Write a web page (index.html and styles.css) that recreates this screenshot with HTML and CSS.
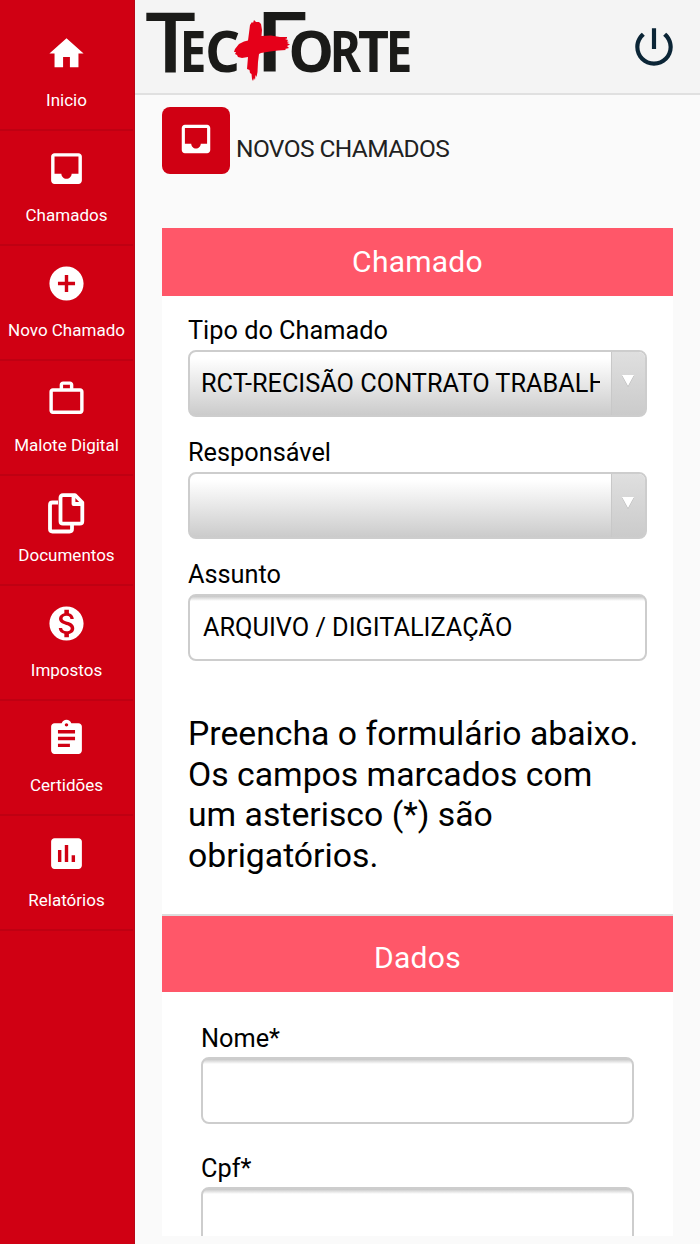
FILE: index.html
```html
<!DOCTYPE html>
<html lang="pt-BR">
<head>
    <meta charset="UTF-8">
    <title>TecForte - Novos Chamados</title>
    <meta name="viewport" content="width=device-width, initial-scale=1">
    <link rel="stylesheet" href="styles.css">
</head>
<body>
<div class="app">
    <nav class="sidebar">
        <a class="menu-item">
            <svg class="icon" viewBox="0 0 24 24"><path d="M10 20v-6h4v6h5v-8h3L12 3 2 12h3v8z"/></svg>
            <span>Inicio</span>
        </a>
        <a class="menu-item">
            <svg class="icon" viewBox="0 0 24 24"><path d="M19 3H4.990C3.880 3 3 3.900 3 5v14c0 1.100.88 2 1.990 2H19c1.100 0 2-.9 2-2V5c0-1.100-.9-2-2-2zm0 12h-4c0 1.660-1.350 3-3 3s-3-1.340-3-3H4.990V5H19v10z"/></svg>
            <span>Chamados</span>
        </a>
        <a class="menu-item">
            <svg class="icon" viewBox="0 0 24 24"><path d="M12 2C6.480 2 2 6.480 2 12s4.480 10 10 10 10-4.480 10-10S17.520 2 12 2zm5 11h-4v4h-2v-4H7v-2h4V7h2v4h4v2z"/></svg>
            <span>Novo Chamado</span>
        </a>
        <a class="menu-item">
            <svg class="icon" viewBox="0 0 24 24"><path fill-rule="evenodd" d="M14 6V4h-4v2h4zM4 8v11h16V8H4zm16-2c1.110 0 2 .89 2 2v11c0 1.110-.89 2-2 2H4c-1.110 0-2-.89-2-2V8c0-1.110.89-2 2-2h4V4c0-1.110.89-2 2-2h4c1.110 0 2 .89 2 2v2h4z"/></svg>
            <span>Malote Digital</span>
        </a>
        <a class="menu-item menu-item-docs">
            <svg class="icon icon-line" viewBox="0 0 41 41">
                <path d="M12 9.500H6.500Q4 9.500 4 12v24q0 2.500 2.500 2.500h17q2.500 0 2.500-2.500v-4"/>
                <path d="M17 2.200h12L36.300 9.500v18.700q0 2.500-2.500 2.500H17q-2.500 0-2.500-2.500V4.700q0-2.500 2.500-2.500z"/>
                <path d="M27.500 2.500v8.500h8.500"/>
            </svg>
            <span>Documentos</span>
        </a>
        <a class="menu-item">
            <svg class="icon" viewBox="0 0 24 24"><path d="M12 2C6.480 2 2 6.480 2 12s4.480 10 10 10 10-4.480 10-10S17.520 2 12 2zm1.410 16.090V20h-2.670v-1.930c-1.710-.36-3.160-1.460-3.270-3.400h1.960c.1 1.050.82 1.870 2.650 1.870 1.960 0 2.400-.98 2.400-1.590 0-.83-.44-1.610-2.670-2.140-2.480-.6-4.180-1.620-4.180-3.670 0-1.720 1.390-2.840 3.110-3.210V4h2.670v1.950c1.860.45 2.790 1.860 2.850 3.390H14.300c-.05-1.110-.64-1.870-2.220-1.870-1.500 0-2.400.68-2.400 1.640 0 .84.65 1.390 2.670 1.910s4.180 1.390 4.180 3.910c-.01 1.830-1.380 2.830-3.120 3.160z"/></svg>
            <span>Impostos</span>
        </a>
        <a class="menu-item">
            <svg class="icon" viewBox="0 0 24 24"><path d="M19 3h-4.180C14.400 1.840 13.300 1 12 1s-2.400.84-2.820 2H5c-1.100 0-2 .9-2 2v14c0 1.100.9 2 2 2h14c1.100 0 2-.9 2-2V5c0-1.100-.9-2-2-2zm-7 0c.55 0 1 .45 1 1s-.45 1-1 1-1-.45-1-1 .45-1 1-1zm2 14H7v-2h7v2zm3-4H7v-2h10v2zm0-4H7V7h10v2z"/></svg>
            <span>Certidões</span>
        </a>
        <a class="menu-item">
            <svg class="icon" viewBox="0 0 24 24"><path d="M19 3H5c-1.100 0-2 .9-2 2v14c0 1.100.9 2 2 2h14c1.100 0 2-.9 2-2V5c0-1.100-.9-2-2-2zM9 17H7v-7h2v7zm4 0h-2V7h2v10zm4 0h-2v-4h2v4z"/></svg>
            <span>Relatórios</span>
        </a>
    </nav>

    <div class="content">
        <header class="topbar">
            <svg class="logo" viewBox="0 0 275 93" role="img" aria-label="TecForte">
                <!-- o braço do F fica escondido atrás da cruz -->
                <clipPath id="f-clip"><path d="M110 0h70v30h-38v50h-32z"/></clipPath>
                <g class="logo-big">
                    <text x="10" y="72" textLength="51" lengthAdjust="spacingAndGlyphs">T</text>
                    <text x="119" y="72" textLength="55" lengthAdjust="spacingAndGlyphs" clip-path="url(#f-clip)">F</text>
                </g>
                <g class="logo-small">
                    <text x="44.700" y="72" textLength="26.600" lengthAdjust="spacingAndGlyphs">E</text>
                    <text x="70.300" y="72" textLength="34.700" lengthAdjust="spacingAndGlyphs">C</text>
                    <text x="153.500" y="72" textLength="45.500" lengthAdjust="spacingAndGlyphs">O</text>
                    <text x="194.700" y="72" textLength="31.300" lengthAdjust="spacingAndGlyphs">R</text>
                    <text x="223" y="72" textLength="31" lengthAdjust="spacingAndGlyphs">T</text>
                    <text x="250.800" y="72" textLength="26.600" lengthAdjust="spacingAndGlyphs">E</text>
                </g>
                <!-- cruz em pincel -->
                <path class="logo-cross" d="M115 25L117 22 118 23 119 20 121 22 124 22 126 24 127 30 126.500 36 136 35.500 145 37 152 37 152 38.500 150 39 153 40 152 41.500 154 42 152 43 155 44.500 152 46 154 48 150 49 151 50 143 50.500 135 51.500 126 53 124 54 123 62 122.500 72 121.500 77 120.500 75 120 80 119 78 118 81 117 79 116.500 74 115 73 114.500 70 112 69 113 57 107 58 103 57 102 55 100 54 101 52 99 52 100 49 104 44 109 41.500 113 40.500 114 33z"/>
            </svg>
            <svg class="power" viewBox="0 0 24 24"><path d="M13 3h-2v10h2V3zm4.830 2.170l-1.420 1.420C17.990 7.860 19 9.810 19 12c0 3.870-3.130 7-7 7s-7-3.130-7-7c0-2.190 1.010-4.140 2.580-5.420L6.170 5.170C4.230 6.820 3 9.260 3 12c0 4.970 4.030 9 9 9s9-4.030 9-9c0-2.740-1.230-5.180-3.170-6.830z"/></svg>
        </header>

        <main class="page">
            <div class="page-title">
                <div class="title-icon">
                    <svg viewBox="0 0 24 24"><path d="M19 3H4.990C3.880 3 3 3.900 3 5v14c0 1.100.88 2 1.990 2H19c1.100 0 2-.9 2-2V5c0-1.100-.9-2-2-2zm0 12h-4c0 1.660-1.350 3-3 3s-3-1.340-3-3H4.990V5H19v10z"/></svg>
                </div>
                <h1>NOVOS CHAMADOS</h1>
            </div>

            <form class="card">
                <h2 class="card-header">Chamado</h2>
                <div class="card-body">
                    <label class="label">Tipo do Chamado</label>
                    <div class="select">
                        <span class="select-text">RCT-RECISÃO CONTRATO TRABALHO</span>
                        <span class="select-arrow"><svg viewBox="0 0 12 12"><path class="arrow-shade" d="M0 1h12L6 12z"/><path d="M0 0h12L6 11z"/></svg></span>
                    </div>
                    <label class="label">Responsável</label>
                    <div class="select">
                        <span class="select-text"></span>
                        <span class="select-arrow"><svg viewBox="0 0 12 12"><path class="arrow-shade" d="M0 1h12L6 12z"/><path d="M0 0h12L6 11z"/></svg></span>
                    </div>
                    <label class="label" for="assunto">Assunto</label>
                    <input class="input" id="assunto" type="text" value="ARQUIVO / DIGITALIZAÇÃO">
                    <p class="notice">Preencha o formulário abaixo.<br>Os campos marcados com<br>um asterisco (*) são<br>obrigatórios.</p>
                </div>

                <h2 class="card-header card-header-dados">Dados</h2>
                <div class="card-body card-body-dados">
                    <label class="label" for="nome">Nome*</label>
                    <input class="input" id="nome" type="text">
                    <label class="label" for="cpf">Cpf*</label>
                    <input class="input" id="cpf" type="text">
                </div>
            </form>
        </main>
    </div>
</div>
</body>
</html>
```
FILE: styles.css
```css
* {
    box-sizing: border-box;
}

body {
    margin: 0;
    background: #fafafa;
    font-family: Roboto, "Liberation Sans", sans-serif;
    color: #000;
    overflow: hidden;
}

.app {
    display: flex;
    height: 1244px;
}

/* menu lateral */
.sidebar {
    width: 135px;
    flex: none;
    padding: 16px 1px 0 0;
    background: #d00013;
    border-right: 1px solid #b90717;
}

.menu-item {
    display: flex;
    flex-direction: column;
    align-items: center;
    height: 115px;
    padding-top: 17px;
    border-bottom: 2px solid #bf0012;
    color: #fff;
    font-size: 17px;
    line-height: 20px;
    white-space: nowrap;
}

.menu-item span {
    margin-top: 16px;
}

.menu-item-docs {
    height: 110px;
}

.menu-item-docs span {
    margin-top: 11px;
}

.icon {
    width: 41px;
    height: 41px;
    flex: none;
    fill: #fff;
}

.icon-line {
    fill: none;
    stroke: #fff;
    stroke-width: 3.8;
    stroke-linejoin: round;
}

.content {
    flex: 1;
    min-width: 0;
}

/* topo */
.topbar {
    display: flex;
    justify-content: space-between;
    height: 95px;
    padding-right: 21px;
    background: #f4f4f4;
    border-bottom: 2px solid #e0e0e0;
}

.logo {
    width: 275px;
    height: 93px;
    overflow: visible;
    font-family: "Noto Sans", sans-serif;
    font-weight: bold;
    fill: #1a1a18;
}

.logo-big {
    font-family: "Open Sans", "Noto Sans", sans-serif;
    font-size: 82.6px;
    font-weight: 600;
}

.logo-small {
    font-size: 58px;
}

.logo-cross {
    fill: #e50019;
}

.power {
    width: 50px;
    height: 50px;
    margin-top: 22px;
    fill: #0b2536;
}

.page {
    padding: 12px 27px 0;
}

.page-title {
    display: flex;
    gap: 6px;
    height: 67px;
}

.title-icon {
    width: 68px;
    height: 67px;
    padding: 13px 15px;
    border-radius: 8px;
    background: #d00013;
}

.title-icon svg {
    display: block;
    width: 38px;
    height: 38px;
    fill: #fff;
}

h1 {
    margin: 27px 0 0;
    font-size: 24.5px;
    font-weight: normal;
    line-height: 30px;
    letter-spacing: -0.6px;
    color: #212121;
}

/* formulario */
.card {
    height: 1008px;
    margin-top: 54px;
    background: #fff;
    overflow: hidden;
}

.card-header {
    height: 68px;
    margin: 0;
    background: #ff5769;
    color: #fff;
    font-size: 30px;
    font-weight: normal;
    line-height: 67px;
    letter-spacing: 0.25px;
    text-align: center;
}

.card-header-dados {
    height: 78px;
    border-top: 2px solid #dcdcdc;
    line-height: 84px;
}

.card-body {
    height: 618px;
    padding: 18px 26px 0;
}

.card-body-dados {
    padding: 29px 39px 0;
}

.label {
    display: block;
    height: 36px;
    font-size: 25.3px;
    line-height: 34px;
}

.card-body-dados .label {
    line-height: 36px;
}

.select,
.input {
    display: flex;
    width: 100%;
    height: 67px;
    margin: 0 0 19px;
    border: 2px solid #cdcdcd;
    border-radius: 8px;
    font: 25.3px Roboto, "Liberation Sans", sans-serif;
}

.select {
    background: linear-gradient(#fff 10%, #cbcbcb);
    overflow: hidden;
}

.select-text {
    flex: 1;
    margin: 0 11px 0 11px;
    line-height: 63px;
    white-space: nowrap;
    overflow: hidden;
}

.select-arrow {
    width: 34px;
    padding: 23px 0 0 10px;
    border-left: 1px solid #c8c8c8;
    background: linear-gradient(#dfdfdf, #cbcbcb);
}

.select-arrow svg {
    display: block;
    width: 12px;
    height: 12px;
    fill: #fff;
}

.select-arrow .arrow-shade {
    fill: #b5b5b5;
}

.input {
    padding: 0 13px 1px;
    background: linear-gradient(#c6c6c6, #fff 5px);
    color: #000;
    outline: none;
}

.card-body-dados .input {
    margin-bottom: 27px;
}

.notice {
    margin: 53px 0 0;
    font-size: 33.75px;
    line-height: 40.7px;
}
```
